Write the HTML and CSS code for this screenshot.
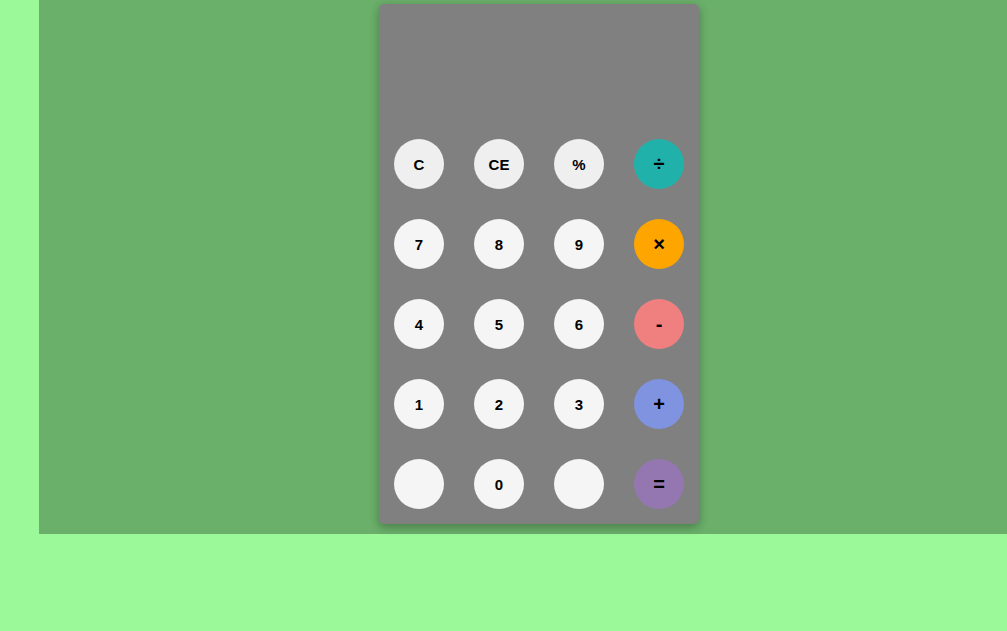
FILE: index.html
```html
<!DOCTYPE html>
<html>
<head>
<meta charset="utf-8">
<link rel="stylesheet" href="styles.css">
</head>
<body>
<div class="stage">
  <div class="calc">
    <div class="display"></div>
    <div class="keys">
      <button class="key fn">C</button>
      <button class="key fn">CE</button>
      <button class="key fn">%</button>
      <button class="key op div">÷</button>
      <button class="key">7</button>
      <button class="key">8</button>
      <button class="key">9</button>
      <button class="key op mul">×</button>
      <button class="key">4</button>
      <button class="key">5</button>
      <button class="key">6</button>
      <button class="key op sub">-</button>
      <button class="key">1</button>
      <button class="key">2</button>
      <button class="key">3</button>
      <button class="key op add">+</button>
      <button class="key"></button>
      <button class="key">0</button>
      <button class="key"></button>
      <button class="key op eq">=</button>
    </div>
  </div>
</div>
</body>
</html>
```
FILE: styles.css
```css
html, body {
  margin: 0;
  padding: 0;
}
body {
  background: #9cf999;
  font-family: "Liberation Sans", Arial, sans-serif;
  height: 631px;
  overflow: hidden;
}
.stage {
  margin-left: 39px;
  height: 534px;
  background: #6aaf6a;
  padding: 4px 0 0 340px;
  box-sizing: border-box;
}
.calc {
  width: 320px;
  height: 520px;
  background: #808080;
  border-radius: 5px;
  box-shadow: 0 3px 10px rgba(0, 0, 0, 0.3);
  padding: 15px;
  box-sizing: border-box;
  display: flex;
  flex-direction: column;
}
.display {
  height: 120px;
  flex: none;
}
.keys {
  display: grid;
  grid-template-columns: repeat(4, 50px);
  grid-auto-rows: 50px;
  column-gap: 30px;
  row-gap: 30px;
}
.key {
  width: 50px;
  height: 50px;
  border: none;
  border-radius: 50%;
  background: #f5f5f5;
  font-family: "Liberation Sans", Arial, sans-serif;
  font-weight: bold;
  font-size: 15px;
  color: #000;
  padding: 1px 0 0;
  display: flex;
  align-items: center;
  justify-content: center;
}
.fn { background: #efefef; }
.op { font-size: 20px; }
.div { background: #20b2aa; }
.mul { background: #ffa500; }
.sub { background: #f08080; }
.add { background: #7f93e0; }
.eq { background: #9477b0; }
```
